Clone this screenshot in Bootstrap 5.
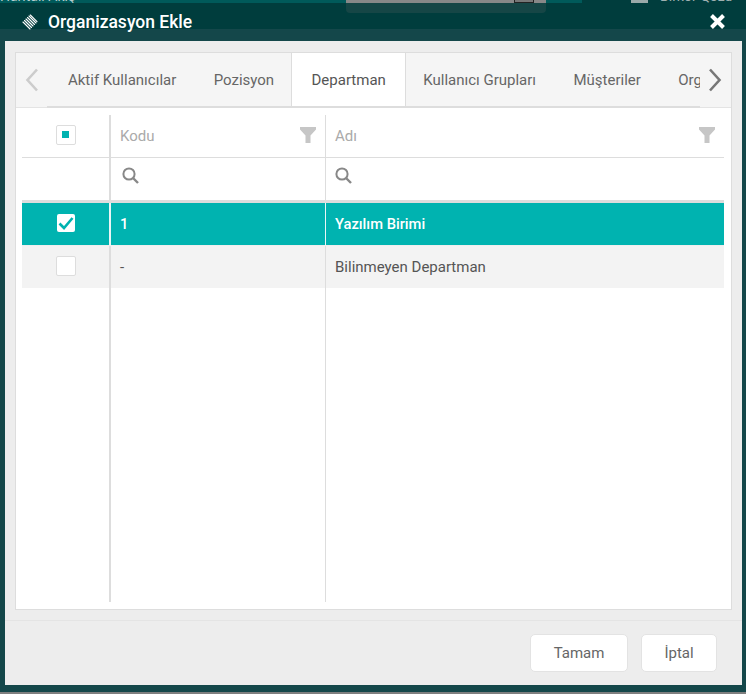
<!DOCTYPE html>
<html lang="tr">
<head>
<meta charset="utf-8">
<title>Organizasyon Ekle</title>
<link href="https://cdn.jsdelivr.net/npm/bootstrap@5.3.0/dist/css/bootstrap.min.css" rel="stylesheet">
<style>
html,body{height:694px;overflow:hidden}
body{background:#14474a;font-family:Roboto,"Liberation Sans",sans-serif;font-size:15px;color:#555;position:relative}
.top-strip{height:3px;background:#005a5a;overflow:hidden;position:relative}
.strip-text{position:absolute;left:0;top:-11px;color:#b9cfcf;font-size:14px;line-height:14px;white-space:nowrap}
.strip-user{position:absolute;left:660px;top:-11px;color:#9fb0b0;font-size:14px;line-height:14px;white-space:nowrap}
.strip-gray{position:absolute;left:346px;top:0;width:200px;height:3px;background:#888}
.strip-box{position:absolute;left:514px;top:-4px;width:20px;height:7px;background:#777;border:1px solid #222}
.strip-dark{position:absolute;left:582px;top:0;right:0;height:3px;background:#003d3d}
.strip-icon{position:absolute;left:631px;top:0;width:17px;height:3px;background:#9aa9a9}
.dlg-head{height:38px;background:linear-gradient(#003d3d 0,#003d3d 26px,#14474a 26px);color:#fff;padding:0 21px 0 22px;position:relative}
.head-shade{position:absolute;left:346px;top:0;width:200px;height:10px;background:#164646;border-radius:0 0 4px 4px}
.dlg-title{font-size:17.5px;font-weight:500;line-height:20px;position:relative;padding-top:9px;gap:10px}
.close-ic{position:relative;margin-top:10px;margin-right:-1px}
.dlg-panel{height:644px;margin:0 4px 0 5px;background:#ededed;padding:11px 10px 0}
.dlg-box{height:558px;background:#fff;border:1px solid #ddd}
.tab-bar{height:55px;background:#f5f5f5;border-bottom:1px solid #e4e4e4}
.tab-arrow{width:31px;height:54px;flex:none}
.arrow-next{padding-right:2px}
.tab-scroll{width:653px;flex:none;height:55px;overflow:hidden;border-bottom:2px solid #ddd}
.tab-list{flex-wrap:nowrap;border:0;width:max-content;margin:0;padding-left:2.3px}
.tab-list .nav-link{height:55px;padding:0 18.7px;line-height:54px;color:#666;font-size:15px;border:0;border-radius:0;white-space:nowrap;background:transparent;margin:0}
.tab-list .nav-link.active{background:#fff;color:#555;border-left:1px solid #ddd;border-right:1px solid #ddd;margin:0 -1px 0 -2px;padding-left:19.7px}
.grid-wrap{height:501px;padding:7px 7px 7px 6px}
.org-table{width:702px;height:487px;table-layout:fixed;border-collapse:separate;border-spacing:0;margin:0;--bs-table-bg:transparent}
.org-table th,.org-table td{padding:0 9px;border:0;font-weight:400;vertical-align:middle;background:transparent;box-shadow:none;color:#555}
.org-table .c1{width:89px;border-right:2px solid #ddd;padding:0;text-align:center}
.org-table .c2{width:215px;border-right:1px solid #ddd}
.org-table .c3{width:398px}
.org-table .r-head>*{height:43px;border-bottom:1px solid #ddd;color:#aaa}
.org-table .r-filter>*{height:45px;border-bottom:3px solid #ddd}
.org-table .r-sel>*{height:43px;background:#00b3b0;color:#fff;font-weight:500;font-size:14.7px;border-bottom:1px solid #eee}
.org-table .r-sel .c1,.org-table .r-sel .c2{border-right-color:#e9f5f5}
.org-table .r-alt>*{height:42px;background:#f3f3f3}
.head-in{display:flex;justify-content:space-between;align-items:center}
.funnel-ic{margin-bottom:2px}
.search-ic{display:block;margin-bottom:8px}
.search-first{margin-left:2px}
.chk{display:flex;width:20px;height:20px;background:#fff;border:1px solid #ddd;border-radius:2px;align-items:center;justify-content:center;margin:0 auto 2px}
.chk-dot{width:7px;height:7px;background:#00b3b0;margin-bottom:1px}
.chk-on{width:18px;height:18px;border:0}
.dlg-foot{margin-top:10px;margin-left:-10px;margin-right:-10px;height:65px;border-top:1px solid #e4e4e4;padding:13px 25px 0 0;gap:13px}
.foot-btn{height:38px;background:#fff;border:1px solid #e3e3e3;border-radius:5px;color:#666;font-size:15px;padding:0;line-height:36px}
.btn-ok{width:98px}
.btn-no{width:76px}
.bot-gray{height:2px;background:#7f7f7f;margin-top:7px}
</style>
</head>
<body>
<div class="top-strip">
  <span class="strip-text">Haritalı Akış</span>
  <span class="strip-gray"></span><span class="strip-box"></span><span class="strip-dark"></span><span class="strip-icon"></span>
  <span class="strip-user">Birkor Qozu</span>
</div>
<div class="dlg-head d-flex align-items-start justify-content-between">
  <span class="head-shade"></span>
  <div class="d-flex align-items-center dlg-title">
    <svg width="16" height="16" viewBox="0 0 16 16" aria-hidden="true"><g stroke="#fff" stroke-width="1.1" fill="none" stroke-linecap="round"><path d="M1 8 8 15"/><path d="M2.5 6.5 9.5 13.5"/><path d="M4 5 11 12"/><path d="M5.5 3.5 12.5 10.5"/><path d="M7 2 14 9"/><path d="M8.3 1 15 7.7"/></g></svg>
    <span>Organizasyon Ekle</span>
  </div>
  <svg class="close-ic" width="17" height="17" viewBox="0 0 17 17" aria-hidden="true"><path d="M2.5 2.5 14.5 14.5M14.5 2.5 2.5 14.5" stroke="#fff" stroke-width="4"/></svg>
</div>
<div class="dlg-panel">
  <div class="dlg-box">
    <div class="tab-bar d-flex align-items-start">
      <div class="tab-arrow d-flex align-items-center justify-content-center">
        <svg width="14" height="24" viewBox="0 0 14 24" aria-hidden="true"><path d="M12 1.5 2.5 12 12 22.5" fill="none" stroke="#ccc" stroke-width="2.6"/></svg>
      </div>
      <div class="tab-scroll">
        <ul class="nav nav-tabs tab-list">
          <li class="nav-item"><a class="nav-link" href="#">Aktif Kullanıcılar</a></li>
          <li class="nav-item"><a class="nav-link" href="#">Pozisyon</a></li>
          <li class="nav-item"><a class="nav-link active" href="#">Departman</a></li>
          <li class="nav-item"><a class="nav-link" href="#">Kullanıcı Grupları</a></li>
          <li class="nav-item"><a class="nav-link" href="#">Müşteriler</a></li>
          <li class="nav-item"><a class="nav-link" href="#">Organizasyon</a></li>
        </ul>
      </div>
      <div class="tab-arrow arrow-next d-flex align-items-center justify-content-center">
        <svg width="14" height="24" viewBox="0 0 14 24" aria-hidden="true"><path d="M2 1.5 11.5 12 2 22.5" fill="none" stroke="#777" stroke-width="2.6"/></svg>
      </div>
    </div>
    <div class="grid-wrap">
      <table class="table org-table">
        <tbody>
          <tr class="r-head">
            <td class="c1"><span class="chk"><span class="chk-dot"></span></span></td>
            <td class="c2"><div class="head-in"><span>Kodu</span>
              <svg class="funnel-ic" width="16" height="16" viewBox="0 0 16 16" aria-hidden="true"><path d="M0 0H16V2.5L10.5 8.5V16H5.5V8.5L0 2.5Z" fill="#c6c6c6"/></svg></div></td>
            <td class="c3"><div class="head-in"><span>Adı</span>
              <svg class="funnel-ic" width="16" height="16" viewBox="0 0 16 16" aria-hidden="true"><path d="M0 0H16V2.5L10.5 8.5V16H5.5V8.5L0 2.5Z" fill="#c6c6c6"/></svg></div></td>
          </tr>
          <tr class="r-filter">
            <td class="c1"></td>
            <td class="c2"><svg class="search-ic search-first" width="17" height="17" viewBox="0 0 17 17" aria-hidden="true"><circle cx="7" cy="7" r="5.6" fill="none" stroke="#888" stroke-width="2"/><path d="M11 11 16 16" stroke="#888" stroke-width="2.4"/></svg></td>
            <td class="c3"><svg class="search-ic" width="17" height="17" viewBox="0 0 17 17" aria-hidden="true"><circle cx="7" cy="7" r="5.6" fill="none" stroke="#888" stroke-width="2"/><path d="M11 11 16 16" stroke="#888" stroke-width="2.4"/></svg></td>
          </tr>
          <tr class="r-sel">
            <td class="c1"><span class="chk chk-on"><svg width="16" height="14" viewBox="0 0 16 14" aria-hidden="true"><path d="M1.5 7.5 6 12 14.5 2" fill="none" stroke="#00b3b0" stroke-width="2.6"/></svg></span></td>
            <td class="c2">1</td>
            <td class="c3">Yazılım Birimi</td>
          </tr>
          <tr class="r-alt">
            <td class="c1"><span class="chk"></span></td>
            <td class="c2">-</td>
            <td class="c3">Bilinmeyen Departman</td>
          </tr>
          <tr>
            <td class="c1"></td>
            <td class="c2"></td>
            <td class="c3"></td>
          </tr>
        </tbody>
      </table>
    </div>
  </div>
  <div class="dlg-foot d-flex justify-content-end align-items-start">
    <button type="button" class="btn foot-btn btn-ok">Tamam</button>
    <button type="button" class="btn foot-btn btn-no">İptal</button>
  </div>
</div>
<div class="bot-gray"></div>
</body>
</html>
